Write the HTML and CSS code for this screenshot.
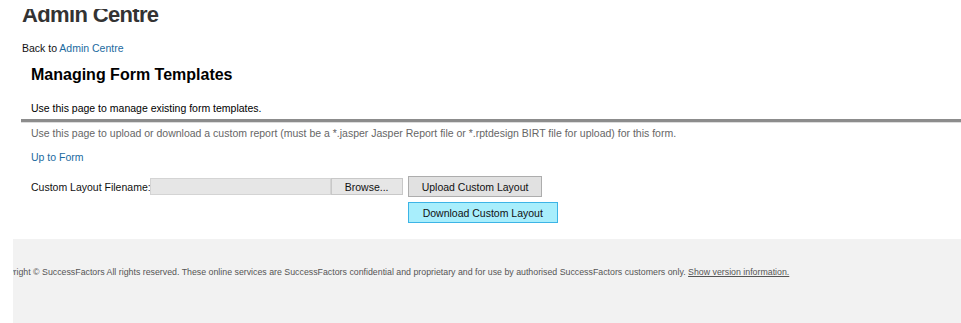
FILE: index.html
```html
<!DOCTYPE html>
<html lang="en">
<head>
    <meta charset="UTF-8">
    <meta name="viewport" content="width=device-width, initial-scale=1.0">
    <title>Managing Form Templates</title>
    <link rel="stylesheet" href="styles.css">
</head>
<body>
    <div class="page">
        <div class="title-strip">
            <h1 class="page-title">Admin Centre</h1>
        </div>
        <p class="crumb">Back to <a href="#">Admin Centre</a></p>

        <div class="section">
            <h2 class="section-title">Managing Form Templates</h2>
            <p class="intro">Use this page to manage existing form templates.</p>
        </div>

        <div class="panel">
            <p class="note">Use this page to upload or download a custom report (must be a *.jasper Jasper Report file or *.rptdesign BIRT file for upload) for this form.</p>
            <p class="up-link"><a href="#">Up to Form</a></p>

            <form class="layout-form" onsubmit="return false">
                <div class="file-row">
                    <label for="layout-file">Custom Layout Filename:</label>
                    <span class="file-box" id="layout-file"></span>
                    <button type="button" class="browse-button">Browse...</button>
                </div>
                <button type="submit" class="form-button">Upload Custom Layout</button>
                <button type="button" class="form-button form-button-active">Download Custom Layout</button>
            </form>
        </div>
    </div>

    <footer class="site-footer">
        <p class="footer-text">Copyright &copy; SuccessFactors All rights reserved. These online services are SuccessFactors confidential and proprietary and for use by authorised SuccessFactors customers only. <a href="#">Show version information.</a></p>
    </footer>
</body>
</html>
```

FILE: styles.css
```css
body {
    font-family: "Liberation Sans", Arial, sans-serif;
    font-size: 10.5px;
    margin: 0;
    padding: 0;
    background-color: #ffffff;
    color: #111111;
    overflow: hidden;
}
a {
    color: #1b6aa0;
    text-decoration: none;
}
.page {
    padding-left: 21px;
}

/* the title is scrolled partly out of view */
.title-strip {
    margin: 9px 0 0 1px;
    height: 17px;
    overflow: hidden;
}
.page-title {
    font-size: 22px;
    letter-spacing: -0.65px;
    color: #333333;
    margin: -5px 0 0 0;
    line-height: 22px;
}
.crumb {
    margin: 16px 0 0 1px;
    line-height: 13px;
}
.section {
    padding-left: 10px;
}
.section-title {
    font-size: 16px;
    color: #000000;
    margin: 10px 0 0 0;
    line-height: 20px;
}
.intro {
    margin: 17px 0 0 0;
    line-height: 13px;
    color: #000000;
}
.panel {
    margin-top: 4px;
    border-top: 3px solid #8c8c8c;
    box-shadow: inset 0 1px 0 #dcdcdc;
    padding: 5px 0 0 10px;
}
.note {
    margin: 0;
    color: #666666;
    line-height: 13px;
}
.up-link {
    margin: 11px 0 0 0;
    line-height: 13px;
}

/* upload / download row */
.layout-form {
    display: grid;
    grid-template-columns: auto 1fr;
    column-gap: 6px;
    row-gap: 5px;
    justify-items: start;
    align-items: center;
    margin-top: 12px;
}
.file-row {
    display: flex;
    align-items: center;
    grid-row: 1;
}
.file-box {
    display: block;
    width: 179px;
    height: 15px;
    margin-left: -1px;
    background-color: #e6e6e6;
    border: 1px solid #d4d4d4;
}
.browse-button {
    font-family: inherit;
    font-size: 10.5px;
    height: 17px;
    width: 72px;
    padding: 0;
    background-color: #e6e6e6;
    border: 1px solid #c8c8c8;
    color: #111111;
}
.form-button {
    font-family: inherit;
    font-size: 10.5px;
    height: 21px;
    padding: 0 13px;
    margin-left: -1px;
    background-color: #e1e1e1;
    border: 1px solid #adadad;
    color: #111111;
    cursor: pointer;
}
.form-button-active {
    grid-column: 2;
    padding: 0 14px;
    background-color: #a8eefc;
    border-color: #3cb4e6;
}

.site-footer {
    margin: 16px 0 0 13px;
    background-color: #f2f2f2;
    height: 90px;
    overflow: hidden;
}
.footer-text {
    margin: 0 0 0 -20px;
    padding-top: 28px;
    font-size: 8.8px;
    line-height: 11px;
    color: #555555;
    white-space: nowrap;
}
.footer-text a {
    color: #555555;
    text-decoration: underline;
}
```
